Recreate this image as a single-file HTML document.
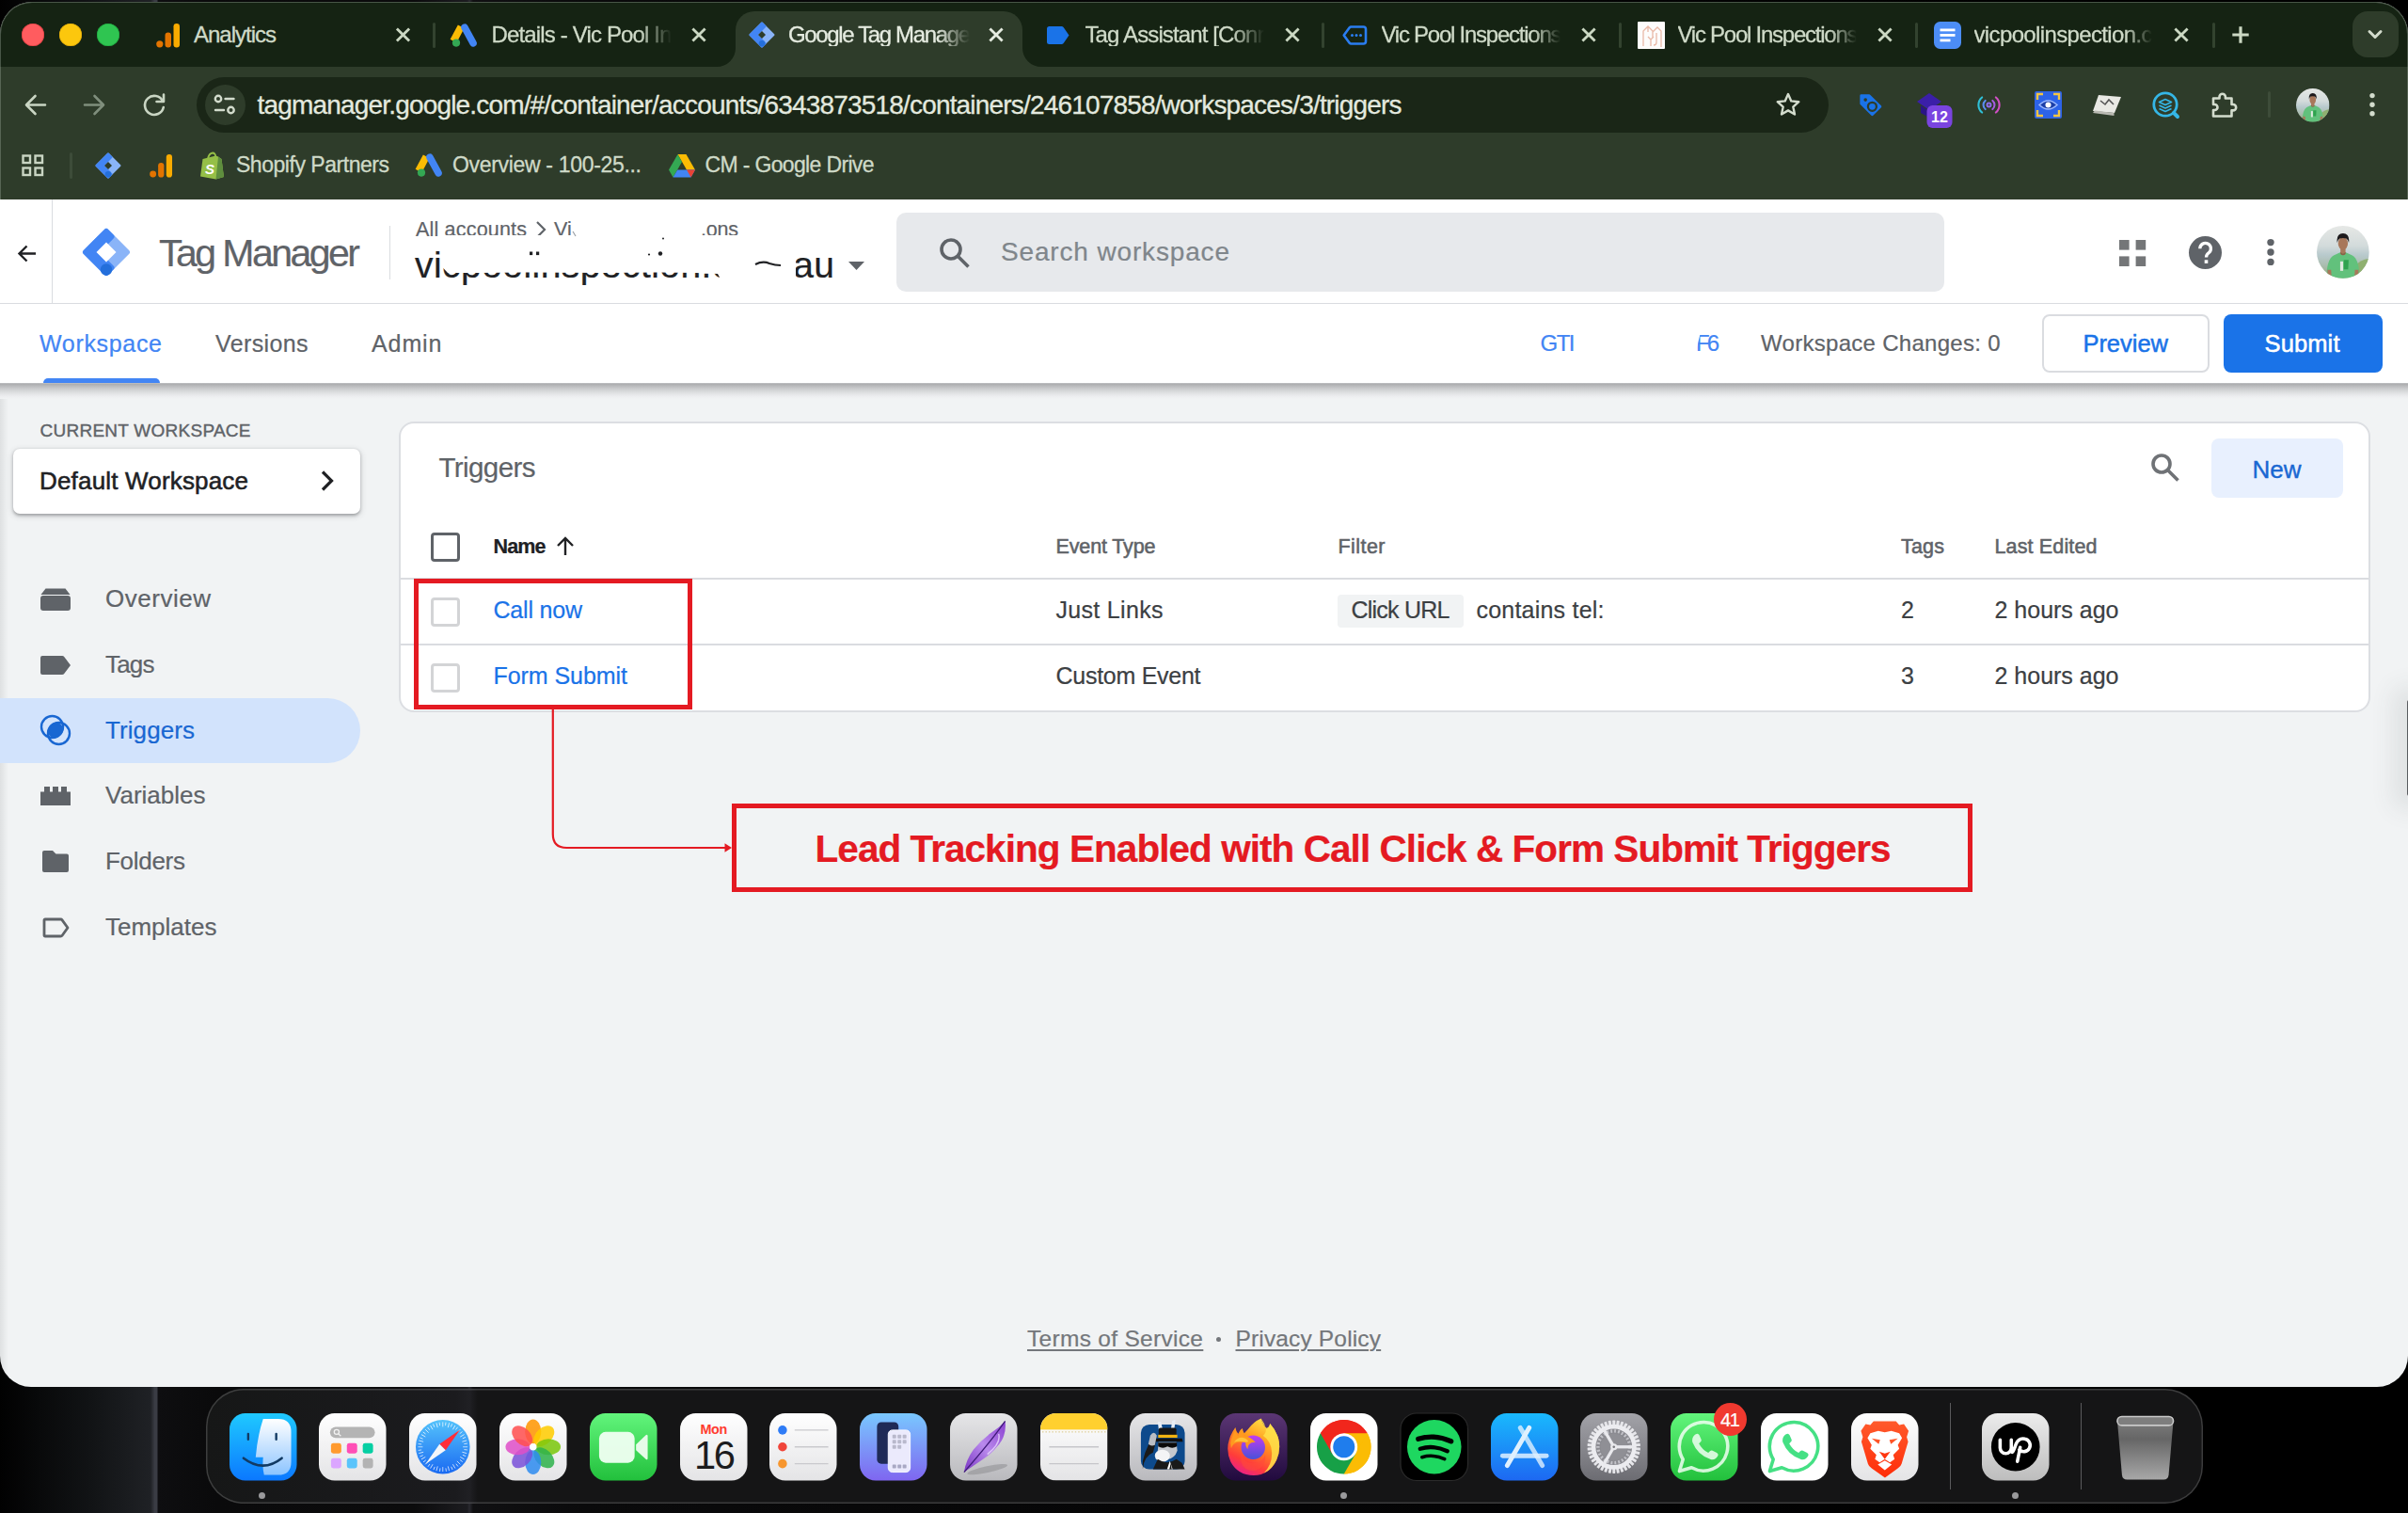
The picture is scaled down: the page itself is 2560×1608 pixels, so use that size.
<!DOCTYPE html>
<html><head><meta charset="utf-8"><title>Google Tag Manager</title>
<style>
*{box-sizing:border-box;margin:0;padding:0}
html,body{width:2560px;height:1608px;overflow:hidden;background:#000;font-family:"Liberation Sans",sans-serif}
.a{position:absolute}
.t{position:absolute;white-space:pre;line-height:1;font-family:"Liberation Sans",sans-serif;-webkit-text-stroke:.22px}
svg{position:absolute;overflow:visible}
#desk{position:absolute;left:0;top:0;width:2560px;height:1608px;background:linear-gradient(90deg,#010101 0,#08090a 40px,#121416 100px,#1f2125 160px,#3a3c44 164.500px,#3a3c44 166.500px,#0e0e10 168.500px,#0a0a0b 230px,#0b0b0c 440px,#1c1c20 497px,#2a2a30 499px,#101012 503px,#0a0a0b 620px,#060607 1200px,#000 2300px)}
#win{position:absolute;left:0;top:2px;width:2560px;height:1472px;border-radius:34px 34px 33px 33px;overflow:hidden;background:#f1f3f4}
#w{position:absolute;left:0;top:-2px;width:2560px;height:1608px}
.tabt{color:#d3dccd}
.sep{position:absolute;top:23.500px;width:3px;height:27px;background:#33432f;border-radius:1.500px}
</style></head><body>
<div id="desk"></div>
<div id="win"><div id="w">
<div class="a" style="left:0;top:0;width:2560px;height:72px;background:#152313"></div>
<div class="a" style="left:0;top:71px;width:2560px;height:141px;background:#2e3c2a"></div>
<div class="a" style="left:0;top:2px;width:2560px;height:210px;border:1.800px solid rgba(160,175,160,.36);border-bottom:none;border-radius:34px 34px 0 0;z-index:40"></div>
<!-- ===== TAB STRIP ===== -->
<div class="a" style="left:22.600px;top:24.900px;width:24.600px;height:24.600px;border-radius:50%;background:#ff5c5f;box-shadow:0 0 0 .6px #d93b3f inset"></div>
<div class="a" style="left:62.500px;top:24.900px;width:24.600px;height:24.600px;border-radius:50%;background:#fcc70d;box-shadow:0 0 0 .6px #d9a50a inset"></div>
<div class="a" style="left:102.600px;top:24.900px;width:24.600px;height:24.600px;border-radius:50%;background:#2fc551;box-shadow:0 0 0 .6px #1fa53e inset"></div>
<!-- active tab -->
<div class="a" style="left:782px;top:12px;width:305px;height:62px;background:#2e3c2a;border-radius:20px 20px 0 0"></div>
<svg style="left:762px;top:51px" width="20" height="20"><path d="M20 20H0A20 20 0 0 0 20 0Z" fill="#2e3c2a"/></svg>
<svg style="left:1087px;top:51px" width="20" height="20"><path d="M0 20H20A20 20 0 0 1 0 0Z" fill="#2e3c2a"/></svg>
<!-- separators -->
<div class="sep" style="left:460px"></div>
<div class="sep" style="left:1405px"></div>
<div class="sep" style="left:1721px"></div>
<div class="sep" style="left:2036px"></div>
<div class="sep" style="left:2352px"></div>
<!-- tab titles -->
<span class="t" style="left:206px;top:24.68px;font-size:24px;font-weight:400;color:#cfdac8;letter-spacing:-1.006px;-webkit-text-stroke:.3px #cfdac8">Analytics</span>
<span class="t" style="left:522.5px;top:24.68px;font-size:24px;font-weight:400;color:#cfdac8;letter-spacing:-0.849px;-webkit-text-stroke:.3px #cfdac8;-webkit-mask-image:linear-gradient(90deg,#000 82%,transparent 100%)">Details - Vic Pool In</span>
<span class="t" style="left:838px;top:24.68px;font-size:24px;font-weight:400;color:#e6ece1;letter-spacing:-1.357px;-webkit-text-stroke:.3px #e6ece1;-webkit-mask-image:linear-gradient(90deg,#000 82%,transparent 100%)">Google Tag Manage</span>
<span class="t" style="left:1153.5px;top:24.68px;font-size:24px;font-weight:400;color:#cfdac8;letter-spacing:-0.876px;-webkit-text-stroke:.3px #cfdac8;-webkit-mask-image:linear-gradient(90deg,#000 82%,transparent 100%)">Tag Assistant [Conr</span>
<span class="t" style="left:1468.5px;top:24.68px;font-size:24px;font-weight:400;color:#cfdac8;letter-spacing:-1.247px;-webkit-text-stroke:.3px #cfdac8;-webkit-mask-image:linear-gradient(90deg,#000 85%,transparent 100%)">Vic Pool Inspections</span>
<span class="t" style="left:1783.5px;top:24.68px;font-size:24px;font-weight:400;color:#cfdac8;letter-spacing:-1.247px;-webkit-text-stroke:.3px #cfdac8;-webkit-mask-image:linear-gradient(90deg,#000 85%,transparent 100%)">Vic Pool Inspections</span>
<span class="t" style="left:2098.5px;top:24.68px;font-size:24px;font-weight:400;color:#cfdac8;letter-spacing:-0.636px;-webkit-text-stroke:.3px #cfdac8;-webkit-mask-image:linear-gradient(90deg,#000 85%,transparent 100%)">vicpoolinspection.c</span>
<!-- close X's -->
<svg style="left:0;top:0" width="2560" height="72" fill="none" stroke="#cbd8c3" stroke-width="2.800" stroke-linecap="butt">
<g id="cx"><path d="M421.9 30.400l13.200 13.200m0-13.200l-13.200 13.200"/></g>
<path d="M736.4 30.400l13.200 13.200m0-13.200l-13.200 13.200"/>
<path d="M1052.4 30.400l13.200 13.200m0-13.200l-13.200 13.200" stroke="#e6ece1"/>
<path d="M1367.4 30.400l13.200 13.200m0-13.200l-13.200 13.200"/>
<path d="M1682.4 30.400l13.200 13.200m0-13.200l-13.200 13.200"/>
<path d="M1997.4 30.400l13.200 13.200m0-13.200l-13.200 13.200"/>
<path d="M2312.4 30.400l13.200 13.200m0-13.200l-13.200 13.200"/>
<path d="M2382 28.300v17.400m-8.700-8.700h17.400" stroke-width="3.200"/>
</svg>
<!-- tab search dropdown -->
<div class="a" style="left:2501px;top:12px;width:48.500px;height:49px;border-radius:16px;background:#2e3c2a"></div>
<svg style="left:2515.200px;top:29.500px" width="20" height="14" fill="none" stroke="#d3dccd" stroke-width="3" stroke-linecap="round" stroke-linejoin="round"><path d="M4 3.5l6 6 6-6"/></svg>
<!-- favicons -->
<!-- analytics -->
<svg style="left:166px;top:24px" width="26" height="27" viewBox="0 0 26 27"><rect x="18.5" y="1" width="6.5" height="25.5" rx="3.2" fill="#f9ab00"/><rect x="9.5" y="10.5" width="6.5" height="16" rx="3.2" fill="#e37400"/><circle cx="3.8" cy="22.8" r="3.6" fill="#e37400"/></svg>
<!-- google ads -->
<svg style="left:480px;top:25px" width="28" height="26" viewBox="0 0 28 26"><path d="M10.2 3.2L2 18.6" stroke="#fbbc04" stroke-width="7.6" stroke-linecap="butt"/><path d="M14 4.2l9 16.6" stroke="#4285f4" stroke-width="7.6" stroke-linecap="round"/><circle cx="5" cy="20.6" r="4.1" fill="#34a853"/></svg>
<!-- gtm -->
<svg style="left:796px;top:23px" width="28" height="28" viewBox="0 0 28 28"><path d="M14 1.5L26.5 14 14 26.5 1.5 14Z" fill="#8ab4f8" stroke="#8ab4f8" stroke-width="2" stroke-linejoin="round"/><path d="M14 1.5L1.5 14 14 26.5 17.5 23 8.6 14 17.5 5Z" fill="#4285f4" stroke="#4285f4" stroke-width="2" stroke-linejoin="round"/><path d="M14 10l4 4-4 4-4-4z" fill="#2e3c2a"/><circle cx="14" cy="23.2" r="3.3" fill="#246fdb"/></svg>
<!-- tag assistant -->
<svg style="left:1113px;top:28px" width="24" height="19" viewBox="0 0 24 19"><path d="M2.5 0H15.5q1.3 0 2.1 1L23.5 9.5 17.6 18q-.8 1-2.1 1H2.5Q0 19 0 16.500V2.500Q0 0 2.500 0Z" fill="#1a73e8"/></svg>
<!-- outline tag w/ dots -->
<svg style="left:1427px;top:27px" width="27" height="21" viewBox="0 0 27 21" fill="none"><path d="M9.4 1.5H22.5q2.5 0 2.500 2.500V17q0 2.500-2.500 2.500H9.4q-1 0-1.700-.8L1.700 10.500 7.700 2.300q.7-.8 1.700-.8Z" stroke="#2a7df0" stroke-width="2.6" stroke-linejoin="round"/><circle cx="10.5" cy="10.500" r="1.500" fill="#2a7df0"/><circle cx="15" cy="10.500" r="1.500" fill="#2a7df0"/><circle cx="19.500" cy="10.500" r="1.500" fill="#2a7df0"/></svg>
<!-- white square logo -->
<div class="a" style="left:1741px;top:23px;width:29px;height:29px;background:#fdfcfb;border-radius:1px"></div>
<svg style="left:1741px;top:23px" width="29" height="29" viewBox="0 0 29 29" fill="none" stroke="#e9b9a6" stroke-width="1.300"><path d="M6 26V10l5-5 5 5v8m-5-13v6m5 0l5-5 4 4v17M11 16l3 3 3-3m-3 3v7M20 12v10q0 3-3 3"/></svg>
<!-- docs -->
<svg style="left:2056px;top:23px" width="29" height="29" viewBox="0 0 29 29"><rect width="29" height="29" rx="6.5" fill="#4c8df6"/><rect x="6.500" y="7.500" width="16" height="2.800" fill="#fff"/><rect x="6.500" y="13" width="16" height="2.800" fill="#fff"/><rect x="6.500" y="18.500" width="11" height="2.800" fill="#fff"/></svg>
<!-- ===== TOOLBAR ===== -->
<svg style="left:0;top:71px" width="2560" height="141" fill="none" stroke-linecap="round" stroke-linejoin="round">
<!-- back -->
<path d="M48 40.500H28.500m9-9.500l-9.500 9.500 9.500 9.500" stroke="#c9d5c3" stroke-width="2.600"/>
<!-- forward -->
<path d="M90 40.500h19.500m-9-9.500l9.500 9.500-9.500 9.500" stroke="#7f8e7c" stroke-width="2.600"/>
<!-- reload -->
<path d="M173 36.500a10 10 0 1 0 .8 6.500" stroke="#c9d5c3" stroke-width="2.600"/><path d="M174 29.500v7.500h-7.500" stroke="#c9d5c3" stroke-width="2.600"/>
</svg>
<!-- omnibox -->
<div class="a" style="left:209px;top:82px;width:1735px;height:59px;border-radius:30px;background:#1a2617"></div>
<div class="a" style="left:217.500px;top:90px;width:43px;height:43px;border-radius:50%;background:#2e3c2a"></div>
<svg style="left:226px;top:99px" width="26" height="24" fill="none" stroke="#d3dccd" stroke-width="2.400" stroke-linecap="round"><circle cx="6" cy="6" r="3.200"/><path d="M13.500 6h9"/><circle cx="19.500" cy="18" r="3.200"/><path d="M3 18h9"/></svg>
<span class="t" style="left:273.500px;top:98.30px;font-size:28px;font-weight:400;color:#e3e9df;letter-spacing:-0.822px;-webkit-text-stroke:.3px #e3e9df">tagmanager.google.com/#/container/accounts/6343873518/containers/246107858/workspaces/3/triggers</span>
<!-- star -->
<svg style="left:1887px;top:97px" width="28" height="28" viewBox="0 0 28 28" fill="none" stroke="#d3dccd" stroke-width="2.400" stroke-linejoin="round"><path d="M14 3l3.300 7.400 8 .8-6 5.400 1.700 7.900-7-4.100-7 4.100 1.700-7.900-6-5.400 8-.8z"/></svg>
<!-- extensions -->
<!-- blue tag -->
<svg style="left:1975.500px;top:98px" width="27" height="27" viewBox="0 0 30 30"><path d="M3 4h9.500l13 13-9.500 9.500-13-13z" fill="#1a73e8" stroke="#1a73e8" stroke-width="3" stroke-linejoin="round"/><circle cx="16" cy="17" r="5" fill="#1a73e8" stroke="#2e3c2a" stroke-width="2.500"/><circle cx="8" cy="9" r="2" fill="#2e3c2a"/></svg>
<!-- purple cap w/ badge -->
<svg style="left:2036px;top:96px" width="40" height="40" viewBox="0 0 40 40"><path d="M2 12L15 3l13 9-13 9z" fill="#3b1fa8"/><path d="M6 16v8l9 5 9-5v-8l-9 6z" fill="#2a1485"/><rect x="12.500" y="16" width="27" height="24" rx="6" fill="#7a44e0"/><text x="26" y="34" font-family="Liberation Sans,sans-serif" font-size="16" font-weight="700" fill="#fff" text-anchor="middle">12</text></svg>
<!-- radio waves -->
<svg style="left:2102.500px;top:101px" width="23" height="21" viewBox="0 0 32 30" fill="none" stroke-width="3" stroke-linecap="round"><circle cx="16" cy="15" r="2.800" stroke="#8d6be8"/><path d="M10.500 8.500a8.500 8.500 0 0 0 0 13" stroke="#5a8df0"/><path d="M21.500 8.500a8.500 8.500 0 0 1 0 13" stroke="#a65be0"/><path d="M5.500 3.500a15 15 0 0 0 0 23" stroke="#2fc0d8"/><path d="M26.500 3.500a15 15 0 0 1 0 23" stroke="#d04fc4"/></svg>
<!-- eye box -->
<svg style="left:2163px;top:97px" width="29" height="29" viewBox="0 0 29 29"><rect width="29" height="29" rx="2" fill="#2d63e8"/><path d="M3 9V3h6M20 3h6v6M26 20v6h-6M9 26H3v-6" fill="none" stroke="#f4c542" stroke-width="2.400"/><path d="M5 14.500q9.500-9 19 0-9.500 9-19 0z" fill="#1c3fa8" stroke="#9bb8ff" stroke-width="1.500"/><circle cx="14.500" cy="14.500" r="3" fill="#fff"/></svg>
<!-- white parallelogram -->
<svg style="left:2224px;top:99px" width="32" height="25" viewBox="0 0 32 25"><path d="M7 2l24 2-7 17L1 19z" fill="#e9e9e4"/><path d="M3 18.500l20.500 2.500v3L1 21z" fill="#b9b9b2"/><path d="M9 8l5 4 4-5 5 5" stroke="#555" stroke-width="1.600" fill="none"/></svg>
<!-- cyan search ring -->
<svg style="left:2287px;top:96px" width="32" height="32" viewBox="0 0 32 32" fill="none"><circle cx="15" cy="15" r="12.200" stroke="#35b6e6" stroke-width="2.800"/><path d="M24 24l4 4" stroke="#35b6e6" stroke-width="4" stroke-linecap="round"/><path d="M8.500 12.500l6.500-3 6.500 3-6.500 3zM8.500 16l6.500 3 6.500-3M8.500 19.500l6.500 3 6.500-3" stroke="#35b6e6" stroke-width="1.700" stroke-linejoin="round"/></svg>
<!-- puzzle -->
<svg style="left:2350px;top:96px" width="30" height="30" viewBox="0 0 30 30" fill="none" stroke="#d3dccd" stroke-width="2.600" stroke-linejoin="round"><path d="M3 8.500h6.500v-1.500a3.200 3.200 0 0 1 6.400 0v1.500H22.500v6.500h1.500a3.200 3.200 0 0 1 0 6.400h-1.500V27.500H3V21h1.500a3 3 0 0 0 0-6H3z"/></svg>
<div class="a" style="left:2411px;top:97px;width:3px;height:28px;border-radius:1.500px;background:#3d4c39"></div>
<!-- avatar -->
<svg style="left:2441.300px;top:93.600px" width="35.500" height="35.500" viewBox="0 0 56 56"><defs><linearGradient id="gAv2" x1="0" y1="0" x2="0" y2="1"><stop offset="0" stop-color="#e6e8e6"/><stop offset=".38" stop-color="#d3dbdb"/><stop offset=".55" stop-color="#b9cacd"/><stop offset=".75" stop-color="#abbdb0"/><stop offset="1" stop-color="#8fa878"/></linearGradient><clipPath id="gAv2c"><circle cx="28" cy="28" r="28"/></clipPath></defs><g clip-path="url(#gAv2c)"><rect width="56" height="56" fill="url(#gAv2)"/><path d="M40 44q6-8 16-9v21H38z" fill="#8fb070"/><path d="M10.500 58Q10 36 18 31.500l7.500-3.500q2.500 2.500 5 0l7.500 3.500Q46 36 45.500 58Z" fill="#62c17c"/><path d="M11.500 47h3.800l.5 9h-4.500zM40.700 47h3.800l.2 9h-4.500z" fill="#a8775a"/><rect x="25.300" y="22" width="5.400" height="7.500" fill="#a8775a"/><path d="M25.300 28q2.700 3 5.400 0v2q-2.700 2.500-5.400 0z" fill="#8d6046"/><ellipse cx="28" cy="18.800" rx="5.200" ry="6.600" fill="#a8775a"/><path d="M21.800 18q-1.300-9.500 6.200-10 7.500.5 6.200 10-1-3.800-2.800-4.500-3.400-.9-6.800 0Q22.800 14.200 21.800 18Z" fill="#1d1a1c"/><rect x="25" y="38" width="3.200" height="10" fill="#dfe9df"/><path d="M28.800 36.500h5.200l-.5 10h-4.700z" fill="#2fa24f"/></g></svg>
<!-- dots -->
<svg style="left:2516.700px;top:95px" width="10" height="34" fill="#d3dccd"><circle cx="5" cy="6.600" r="2.700"/><circle cx="5" cy="16.200" r="2.700"/><circle cx="5" cy="25.800" r="2.700"/></svg>

<!-- ===== BOOKMARKS ===== -->
<svg style="left:23px;top:164px" width="24" height="24" fill="none" stroke="#c9d5c3" stroke-width="2.400"><rect x="1.500" y="1.500" width="7.500" height="7.500"/><rect x="14.500" y="1.500" width="7.500" height="7.500"/><rect x="1.500" y="14.500" width="7.500" height="7.500"/><rect x="14.500" y="14.500" width="7.500" height="7.500"/></svg>
<div class="a" style="left:73.500px;top:162px;width:3px;height:28px;border-radius:1.500px;background:#3d4c39"></div>
<svg style="left:101px;top:162px" width="28" height="28" viewBox="0 0 28 28"><path d="M14 1.500L26.500 14 14 26.500 1.500 14Z" fill="#8ab4f8" stroke="#8ab4f8" stroke-width="2" stroke-linejoin="round"/><path d="M14 1.500L1.500 14 14 26.500 17.500 23 8.600 14 17.500 5Z" fill="#4285f4" stroke="#4285f4" stroke-width="2" stroke-linejoin="round"/><path d="M14 10l4 4-4 4-4-4z" fill="#2e3c2a"/><circle cx="14" cy="23.200" r="3.300" fill="#246fdb"/></svg>
<svg style="left:159px;top:163px" width="25" height="26" viewBox="0 0 26 27"><rect x="18.500" y="1" width="6.500" height="25.500" rx="3.200" fill="#f9ab00"/><rect x="9.500" y="10.500" width="6.500" height="16" rx="3.200" fill="#e37400"/><circle cx="3.800" cy="22.800" r="3.600" fill="#e37400"/></svg>
<!-- shopify -->
<svg style="left:212px;top:161px" width="27" height="30" viewBox="0 0 27 30"><path d="M3.500 8l14-3.500 2.500 1 3.500 2.500L26 27l-8.500 2.500L1 26.500z" fill="#95bf47"/><path d="M20 5.500l3.500 2.500L26 27l-8.500 2.500z" fill="#5e8e3e"/><path d="M9 8q1-6 5-6.500 3 0 3.500 5" fill="none" stroke="#95bf47" stroke-width="1.800"/><text x="11" y="23.500" font-family="Liberation Sans,sans-serif" font-size="15" font-weight="700" font-style="italic" fill="#fff" text-anchor="middle">S</text></svg>
<span class="t" style="left:251px;top:164.03px;font-size:23px;font-weight:400;color:#cfdac8;letter-spacing:-0.469px;-webkit-text-stroke:.3px #cfdac8">Shopify Partners</span>
<svg style="left:443px;top:163px" width="28" height="26" viewBox="0 0 28 26"><path d="M10.200 3.200L2 18.600" stroke="#fbbc04" stroke-width="7.600"/><path d="M14 4.200l9 16.600" stroke="#4285f4" stroke-width="7.600" stroke-linecap="round"/><circle cx="5" cy="20.600" r="4.100" fill="#34a853"/></svg>
<span class="t" style="left:481px;top:164.03px;font-size:23px;font-weight:400;color:#cfdac8;letter-spacing:-0.321px;-webkit-text-stroke:.3px #cfdac8">Overview - 100-25...</span>
<!-- drive -->
<svg style="left:711px;top:164px" width="28" height="25" viewBox="0 0 28 25"><path d="M9.500 0h9L28 16.500h-9z" fill="#fbbc04"/><path d="M9.500 0L0 16.500 4.500 24.500 14 8z" fill="#34a853"/><path d="M4.500 24.500h19l4.500-8H9.200z" fill="#4285f4"/><path d="M19 16.500h9l-4.500 8z" fill="#ea4335"/></svg>
<span class="t" style="left:749.500px;top:164.03px;font-size:23px;font-weight:400;color:#cfdac8;letter-spacing:-0.652px;-webkit-text-stroke:.3px #cfdac8">CM - Google Drive</span>
<!-- ===== GTM HEADER ===== -->
<div class="a" style="left:0;top:212px;width:2560px;height:195px;background:#fff;z-index:5"></div>
<div class="a" style="left:0;top:406.700px;width:2560px;height:17px;background:linear-gradient(#c4c5c7 0,#adaeb0 7%,#b4b5b7 14%,#c7c8ca 32%,#d8dadb 52%,#e6e7e9 72%,#eeeff1 88%,#f1f3f4 100%);z-index:5"></div>
<div class="a" style="left:0;top:0;width:2560px;height:1608px;z-index:6">
<div class="a" style="left:0;top:321.500px;width:2560px;height:1.500px;background:#dadce0"></div>
<div class="a" style="left:54.500px;top:212px;width:1.500px;height:110px;background:#dadce0"></div>
<svg style="left:17px;top:258px" width="24" height="24" fill="none" stroke="#202124" stroke-width="2.400" stroke-linejoin="miter"><path d="M21 11.500H4m7.500-8L3.500 11.500l8 8"/></svg>
<!-- logo -->
<svg style="left:87px;top:242px" width="52" height="52" viewBox="0 0 52 52"><path d="M26 4L48 26 26 48 4 26Z" fill="#8ab4f8" stroke="#8ab4f8" stroke-width="6" stroke-linejoin="round"/><path d="M26 4L4 26 26 48 31.500 42.500 15 26 31.500 9.500Z" fill="#4285f4" stroke="#4285f4" stroke-width="6" stroke-linejoin="round"/><path d="M26 15.500L36.500 26 26 36.500 15.500 26z" fill="#fff"/><circle cx="26" cy="44.500" r="6.200" fill="#246fdb"/></svg>
<span class="t" style="left:169px;top:248.79px;font-size:41px;font-weight:400;color:#5f6368;letter-spacing:-2.533px;">Tag Manager</span>
<div class="a" style="left:413.500px;top:240px;width:1.500px;height:57px;background:#dadce0"></div>
<span class="t" style="left:442px;top:233.80px;font-size:21.500px;font-weight:400;color:#5f6368;letter-spacing:0.189px;">All accounts</span>
<svg style="left:568px;top:234px" width="14" height="20" fill="none" stroke="#5f6368" stroke-width="2.200"><path d="M3 2l8 8-8 8"/></svg>
<span class="t" style="left:589px;top:233.80px;font-size:21.500px;font-weight:400;color:#5f6368;">Vi</span>
<span class="t" style="left:745px;top:233.80px;font-size:21.500px;font-weight:400;color:#5f6368;letter-spacing:-0.214px;">.ons</span>
<!-- container name (redacted) -->
<span class="t" style="left:441px;top:261.99px;font-size:39px;font-weight:400;color:#202124;letter-spacing:0.446px;">vicpoolinspection.com.au</span>
<svg style="left:0;top:0" width="960" height="330"><path d="M468.500 250H846V300H768L763 291 740 290 700 289.500 640 290 560 289.500 500 290 476 290 468.500 282Z" fill="#fff"/><path d="M803 281q8-4 15-1 6 2 12 2" fill="none" stroke="#202124" stroke-width="2.200"/><rect x="563" y="267.500" width="3.200" height="3.600" fill="#202124"/><rect x="570" y="267.500" width="3.200" height="3.600" fill="#202124"/><circle cx="702" cy="269.500" r="2.200" fill="#202124"/><circle cx="690" cy="270.500" r="1.100" fill="#202124"/><circle cx="705" cy="253.500" r="1" fill="#202124"/><path d="M609 246l3 5" stroke="#9aa0a6" stroke-width="1.200"/></svg>
<svg style="left:902px;top:278px" width="18" height="10"><path d="M0 0h17l-8.500 9z" fill="#5f6368"/></svg>
<!-- search -->
<div class="a" style="left:953px;top:226.200px;width:1114px;height:83.500px;border-radius:10px;background:#e7e9ec"></div>
<svg style="left:998px;top:252px" width="34" height="34" fill="none" stroke="#5f6368" stroke-width="3.600"><circle cx="13" cy="13" r="10"/><path d="M20.500 20.500L31.500 31.500" stroke-linecap="butt"/></svg>
<span class="t" style="left:1064px;top:253.80px;font-size:28px;font-weight:400;color:#80868b;letter-spacing:0.844px;">Search workspace</span>
<!-- right icons -->
<svg style="left:2253px;top:254.500px" width="30" height="30" fill="#747678"><rect x="0" y="0" width="10.600" height="10.600"/><rect x="17.600" y="0" width="10.600" height="10.600"/><rect x="0" y="17.400" width="10.600" height="10.600"/><rect x="17.600" y="17.400" width="10.600" height="10.600"/></svg>
<svg style="left:2326.500px;top:250.500px" width="35" height="35" viewBox="0 0 35 35"><circle cx="17.500" cy="17.500" r="17.500" fill="#5f6368"/><path d="M11.800 13.200a5.800 5.800 0 1 1 9.300 4.600q-2.600 1.900-2.600 4.700" fill="none" stroke="#fff" stroke-width="3.300"/><rect x="16.700" y="25.300" width="3.600" height="3.600" fill="#fff"/></svg>
<svg style="left:2408.500px;top:252px" width="10" height="32" fill="#5f6368"><circle cx="5" cy="5.600" r="3.700"/><circle cx="5" cy="16" r="3.700"/><circle cx="5" cy="26.400" r="3.700"/></svg>
<svg style="left:2462.500px;top:240px" width="55.800" height="55.800" viewBox="0 0 56 56"><defs><linearGradient id="gAv1" x1="0" y1="0" x2="0" y2="1"><stop offset="0" stop-color="#e6e8e6"/><stop offset=".38" stop-color="#d3dbdb"/><stop offset=".55" stop-color="#b9cacd"/><stop offset=".75" stop-color="#abbdb0"/><stop offset="1" stop-color="#8fa878"/></linearGradient><clipPath id="gAv1c"><circle cx="28" cy="28" r="28"/></clipPath></defs><g clip-path="url(#gAv1c)"><rect width="56" height="56" fill="url(#gAv1)"/><path d="M40 44q6-8 16-9v21H38z" fill="#8fb070"/><path d="M10.500 58Q10 36 18 31.500l7.500-3.500q2.500 2.500 5 0l7.500 3.500Q46 36 45.500 58Z" fill="#62c17c"/><path d="M11.500 47h3.800l.5 9h-4.500zM40.700 47h3.800l.2 9h-4.500z" fill="#a8775a"/><rect x="25.300" y="22" width="5.400" height="7.500" fill="#a8775a"/><path d="M25.300 28q2.700 3 5.400 0v2q-2.700 2.500-5.400 0z" fill="#8d6046"/><ellipse cx="28" cy="18.800" rx="5.200" ry="6.600" fill="#a8775a"/><path d="M21.800 18q-1.300-9.500 6.200-10 7.500.5 6.200 10-1-3.800-2.800-4.500-3.400-.9-6.800 0Q22.800 14.200 21.800 18Z" fill="#1d1a1c"/><rect x="25" y="38" width="3.200" height="10" fill="#dfe9df"/><path d="M28.800 36.500h5.200l-.5 10h-4.700z" fill="#2fa24f"/></g></svg>

<!-- ===== SUB NAV ===== -->
<span class="t" style="left:42px;top:352.84px;font-size:25px;font-weight:400;color:#4285f4;letter-spacing:0.676px;">Workspace</span>
<span class="t" style="left:229px;top:352.84px;font-size:25px;font-weight:400;color:#5f6368;letter-spacing:0.373px;">Versions</span>
<span class="t" style="left:395px;top:352.84px;font-size:25px;font-weight:400;color:#5f6368;letter-spacing:0.906px;">Admin</span>
<div class="a" style="left:45.500px;top:402px;width:124px;height:5px;border-radius:6px 6px 0 0;background:#4285f4"></div>
<span class="t" style="left:1637.500px;top:353.48px;font-size:24px;font-weight:400;color:#4285f4;letter-spacing:-1.500px;">GTI</span>
<div class="a" style="left:1673.500px;top:350px;width:20px;height:30px;background:#fff"></div>
<span class="t" style="left:1803px;top:353.48px;font-size:24px;font-weight:400;color:#4285f4;letter-spacing:-3.016px;">F6</span><div class="a" style="left:1800px;top:352px;width:4.500px;height:26px;background:#fff;transform:skewX(-14deg)"></div>
<span class="t" style="left:1872px;top:353.48px;font-size:24px;font-weight:400;color:#5f6368;letter-spacing:0.288px;">Workspace Changes: 0</span>
<div class="a" style="left:2170.500px;top:333.500px;width:178px;height:62px;border:2px solid #dadce0;border-radius:8px;background:#fff"></div>
<span class="t" style="left:2214.400px;top:352.71px;font-size:25.500px;font-weight:400;color:#1a73e8;letter-spacing:-0.017px;-webkit-text-stroke:.5px #1a73e8">Preview</span>
<div class="a" style="left:2363.500px;top:333.500px;width:169px;height:62px;border-radius:8px;background:#1a73e8"></div>
<span class="t" style="left:2407.500px;top:352.71px;font-size:25.500px;font-weight:400;color:#fff;letter-spacing:0.125px;-webkit-text-stroke:.5px #fff">Submit</span>
</div>
<!-- edge-shade --><div class="a" style="left:0;top:407px;width:9px;height:1067px;background:linear-gradient(90deg,rgba(60,64,67,.10),rgba(60,64,67,0))"></div>
<!-- ===== SIDEBAR ===== -->
<span class="t" style="left:42.500px;top:447.92px;font-size:19px;font-weight:400;color:#5f6368;letter-spacing:0.254px;-webkit-text-stroke:.4px #5f6368">CURRENT WORKSPACE</span>
<div class="a" style="left:14px;top:477px;width:369px;height:69px;border-radius:7px;background:#fff;box-shadow:0 1.500px 3px rgba(60,64,67,.35),0 2px 6px 1px rgba(60,64,67,.16)"></div>
<span class="t" style="left:42px;top:497.99px;font-size:26px;font-weight:400;color:#202124;letter-spacing:0.177px;-webkit-text-stroke:.55px #202124">Default Workspace</span>
<svg style="left:340px;top:499px" width="16" height="24" fill="none" stroke="#202124" stroke-width="3.200"><path d="M3 2.500l9.500 9.500-9.500 9.500"/></svg>
<!-- active pill -->
<div class="a" style="left:0;top:742px;width:383px;height:69px;border-radius:0 35px 35px 0;background:#d2e3fc"></div>
<span class="t" style="left:112px;top:623.49px;font-size:26px;font-weight:400;color:#5f6368;letter-spacing:0.520px;">Overview</span>
<span class="t" style="left:112px;top:692.99px;font-size:26px;font-weight:400;color:#5f6368;letter-spacing:-0.807px;">Tags</span>
<span class="t" style="left:112px;top:762.99px;font-size:26px;font-weight:400;color:#1967d2;letter-spacing:0.087px;">Triggers</span>
<span class="t" style="left:112px;top:832.49px;font-size:26px;font-weight:400;color:#5f6368;letter-spacing:0.004px;">Variables</span>
<span class="t" style="left:112px;top:902.49px;font-size:26px;font-weight:400;color:#5f6368;letter-spacing:-0.284px;">Folders</span>
<span class="t" style="left:112px;top:971.99px;font-size:26px;font-weight:400;color:#5f6368;letter-spacing:0.000px;">Templates</span>
<!-- icons -->
<!-- overview -->
<svg style="left:42px;top:624px" width="34" height="26" fill="#5f6368"><path d="M6.500 1.500h21l5 6.500h-31z"/><rect x="1" y="9" width="32" height="16" rx="3"/></svg>
<!-- tags -->
<svg style="left:42px;top:696px" width="34" height="22" fill="#5f6368"><path d="M3 1h21q1.500 0 2.400 1.200L33 11l-6.600 8.800Q25.500 21 24 21H3q-2 0-2-2V3q0-2 2-2z"/></svg>
<!-- triggers -->
<svg style="left:42px;top:759px" width="34" height="34" fill="none"><circle cx="13.500" cy="13.500" r="11.500" stroke="#1967d2" stroke-width="2.400"/><circle cx="20.500" cy="20.500" r="11.500" stroke="#1967d2" stroke-width="2.400"/><path d="M9.300 18.500A11.500 11.500 0 0 1 18.500 9.300 11.500 11.500 0 0 1 24.700 15.500 11.500 11.500 0 0 1 15.500 24.700 11.500 11.500 0 0 1 9.300 18.500Z" fill="#1967d2" stroke="#1967d2" stroke-width="2"/></svg>
<!-- variables -->
<svg style="left:42px;top:835px" width="34" height="22" fill="#5f6368"><path d="M1 6.500h4V1h6v5.500h3V1h6v5.500h3V1h6v5.500h4V21H1z"/></svg>
<!-- folders -->
<svg style="left:44px;top:903px" width="30" height="25" fill="#5f6368"><path d="M3 1h9l3.500 3.500H27q2 0 2 2V22q0 2-2 2H3q-2 0-2-2V3q0-2 2-2z"/></svg>
<!-- templates -->
<svg style="left:45px;top:975px" width="30" height="22" fill="none" stroke="#5f6368" stroke-width="2.800" stroke-linejoin="round"><path d="M3 2h16.500q1 0 1.600.8L27 11l-5.900 8.200q-.6.800-1.600.8H3q-1 0-1-1V3q0-1 1-1z"/></svg>
<!-- ===== CARD ===== -->
<div class="a" style="left:423.500px;top:447.500px;width:2096.500px;height:309px;border-radius:16px;background:#fff;border:2px solid #dcdee2"></div>
<span class="t" style="left:466.500px;top:481.53px;font-size:29.500px;font-weight:400;color:#5f6368;letter-spacing:-0.587px;">Triggers</span>
<svg style="left:2286px;top:481px" width="32" height="32" fill="none" stroke="#6f7276" stroke-width="3.600"><circle cx="12" cy="12" r="9"/><path d="M18.500 18.500L29.500 29.500"/></svg>
<div class="a" style="left:2351px;top:466px;width:139.500px;height:63px;border-radius:8px;background:#e8f0fe"></div>
<span class="t" style="left:2394.500px;top:485.99px;font-size:26px;font-weight:400;color:#1967d2;letter-spacing:-0.008px;-webkit-text-stroke:.4px #1967d2">New</span>
<!-- header row -->
<div class="a" style="left:458px;top:565.500px;width:31px;height:31px;border:3px solid #5f6368;border-radius:4px"></div>
<span class="t" style="left:524.500px;top:570.80px;font-size:21.500px;font-weight:700;color:#202124;letter-spacing:-0.854px;">Name</span>
<svg style="left:590px;top:569px" width="22" height="22" fill="none" stroke="#202124" stroke-width="2.400"><path d="M11 21V3m-8 8l8-8 8 8"/></svg>
<span class="t" style="left:1122.500px;top:570.80px;font-size:21.500px;font-weight:400;color:#5f6368;letter-spacing:-0.132px;-webkit-text-stroke:.55px #5f6368">Event Type</span>
<span class="t" style="left:1422.500px;top:570.80px;font-size:21.500px;font-weight:400;color:#5f6368;letter-spacing:0.444px;-webkit-text-stroke:.55px #5f6368">Filter</span>
<span class="t" style="left:2021px;top:570.80px;font-size:21.500px;font-weight:400;color:#5f6368;letter-spacing:0.193px;-webkit-text-stroke:.55px #5f6368">Tags</span>
<span class="t" style="left:2120.500px;top:570.80px;font-size:21.500px;font-weight:400;color:#5f6368;letter-spacing:0.142px;-webkit-text-stroke:.55px #5f6368">Last Edited</span>
<div class="a" style="left:425px;top:614px;width:2093px;height:1.500px;background:#dadce0"></div>
<div class="a" style="left:425px;top:684px;width:2093px;height:1.500px;background:#dadce0"></div>
<!-- row 1 -->
<div class="a" style="left:458px;top:635px;width:31px;height:31px;border:3px solid #d3d4d6;border-radius:4px"></div>
<span class="t" style="left:524.500px;top:635.84px;font-size:25px;font-weight:400;color:#1a73e8;letter-spacing:-0.196px;">Call now</span>
<span class="t" style="left:1122.500px;top:635.84px;font-size:25px;font-weight:400;color:#3c4043;letter-spacing:0.314px;">Just Links</span>
<div class="a" style="left:1422px;top:631.500px;width:134px;height:35px;border-radius:4px;background:#f1f3f4"></div>
<span class="t" style="left:1436.500px;top:635.84px;font-size:25px;font-weight:400;color:#3c4043;letter-spacing:-0.766px;">Click URL</span>
<span class="t" style="left:1569.500px;top:635.84px;font-size:25px;font-weight:400;color:#3c4043;letter-spacing:0.215px;">contains tel:</span>
<span class="t" style="left:2021px;top:635.84px;font-size:25px;font-weight:400;color:#3c4043;">2</span>
<span class="t" style="left:2120.500px;top:635.84px;font-size:25px;font-weight:400;color:#3c4043;letter-spacing:-0.005px;">2 hours ago</span>
<!-- row 2 -->
<div class="a" style="left:458px;top:704.500px;width:31px;height:31px;border:3px solid #d3d4d6;border-radius:4px"></div>
<span class="t" style="left:524.500px;top:705.54px;font-size:25px;font-weight:400;color:#1a73e8;letter-spacing:-0.059px;">Form Submit</span>
<span class="t" style="left:1122.500px;top:705.54px;font-size:25px;font-weight:400;color:#3c4043;letter-spacing:-0.274px;">Custom Event</span>
<span class="t" style="left:2021px;top:705.54px;font-size:25px;font-weight:400;color:#3c4043;">3</span>
<span class="t" style="left:2120.500px;top:705.54px;font-size:25px;font-weight:400;color:#3c4043;letter-spacing:-0.005px;">2 hours ago</span>

<!-- ===== ANNOTATIONS ===== -->
<div class="a" style="left:440.300px;top:614.500px;width:295.300px;height:139.200px;border:5.800px solid #e41a22;z-index:8"></div>
<svg style="left:0;top:0;z-index:8" width="2560" height="1000" fill="none"><path d="M587.800 753V886.500q0 14.500 14.500 14.500H774" stroke="#e41a22" stroke-width="2.200"/><path d="M770.500 896.300l7.500 4.700-7.500 4.700z" fill="#e41a22"/></svg>
<div class="a" style="left:778px;top:854.200px;width:1319px;height:94.200px;border:5.800px solid #e41a22;z-index:8"></div>
<span class="t" style="left:866.500px;top:881.72px;font-size:40.500px;font-weight:700;color:#e41a22;letter-spacing:-0.941px;z-index:8">Lead Tracking Enabled with Call Click &amp; Form Submit Triggers</span>

<!-- ===== FOOTER ===== -->
<span class="t" style="left:1092px;top:1411.26px;font-size:24.500px;font-weight:400;color:#74777b;letter-spacing:0.304px;text-decoration:underline;text-underline-offset:3px;text-decoration-thickness:1.500px">Terms of Service</span>
<div class="a" style="left:1293px;top:1421px;width:5px;height:5px;border-radius:50%;background:#74777b"></div>
<span class="t" style="left:1313.500px;top:1411.26px;font-size:24.500px;font-weight:400;color:#74777b;letter-spacing:0.155px;text-decoration:underline;text-underline-offset:3px;text-decoration-thickness:1.500px">Privacy Policy</span>
<div class="a" style="left:2558.800px;top:744px;width:5px;height:102px;border-radius:3px;background:#5a5c60;box-shadow:0 0 26px 14px rgba(60,64,67,.10);z-index:7"></div>
<!-- ===== DOCK ===== -->
</div></div>
<div class="a" style="left:218.500px;top:1476px;width:2123px;height:122px;border-radius:40px;background:linear-gradient(90deg,#161717 0,#1b1b1e 12.500%,#202024 13.200%,#151516 13.600%,#151516 100%);box-shadow:0 0 0 1.500px rgba(255,255,255,.17) inset"></div>
<svg width="0" height="0" style="left:0;top:0"><defs>
<linearGradient id="gFinder" x1="0" y1="0" x2="0" y2="1"><stop offset="0" stop-color="#1fc9ff"/><stop offset="1" stop-color="#0b78ff"/></linearGradient>
<linearGradient id="gFinderR" x1="0" y1="0" x2="0" y2="1"><stop offset="0" stop-color="#ffffff"/><stop offset="1" stop-color="#8cc4ff"/></linearGradient>
<linearGradient id="gWhite" x1="0" y1="0" x2="0" y2="1"><stop offset="0" stop-color="#ffffff"/><stop offset="1" stop-color="#e4e4e6"/></linearGradient>
<linearGradient id="gSafari" x1="0" y1="0" x2="0" y2="1"><stop offset="0" stop-color="#55c3fb"/><stop offset="1" stop-color="#1a6af2"/></linearGradient>
<linearGradient id="gGreen" x1="0" y1="0" x2="0" y2="1"><stop offset="0" stop-color="#62f57c"/><stop offset="1" stop-color="#22c03c"/></linearGradient>
<linearGradient id="gMirror" x1="0" y1="0" x2="0" y2="1"><stop offset="0" stop-color="#79c8ff"/><stop offset="1" stop-color="#7f66f0"/></linearGradient>
<linearGradient id="gGrey" x1="0" y1="0" x2="0" y2="1"><stop offset="0" stop-color="#e6e6e8"/><stop offset="1" stop-color="#b9b9bd"/></linearGradient>
<linearGradient id="gFeather" x1="1" y1="0" x2="0" y2="1"><stop offset="0" stop-color="#8a3fd0"/><stop offset=".5" stop-color="#b98aec"/><stop offset="1" stop-color="#7a35c4"/></linearGradient>
<linearGradient id="gFox" x1="0" y1="0" x2="0" y2="1"><stop offset="0" stop-color="#5b3674"/><stop offset="1" stop-color="#210a3e"/></linearGradient>
<linearGradient id="gFoxO" x1=".75" y1="0" x2=".3" y2="1"><stop offset="0" stop-color="#ffe84a"/><stop offset=".38" stop-color="#ff9a1e"/><stop offset=".78" stop-color="#ff3b3b"/><stop offset="1" stop-color="#e8208a"/></linearGradient>
<linearGradient id="gFoxP" x1="0" y1="0" x2="0" y2="1"><stop offset="0" stop-color="#c23cf0"/><stop offset="1" stop-color="#4852d8"/></linearGradient>
<linearGradient id="gStore" x1="0" y1="0" x2="0" y2="1"><stop offset="0" stop-color="#19b9fd"/><stop offset="1" stop-color="#1d68f2"/></linearGradient>
<linearGradient id="gSet" x1="0" y1="0" x2="0" y2="1"><stop offset="0" stop-color="#a3a3a9"/><stop offset="1" stop-color="#6c6c72"/></linearGradient>
<linearGradient id="gBrave" x1="0" y1="0" x2="0" y2="1"><stop offset="0" stop-color="#ff5a2c"/><stop offset="1" stop-color="#ff2d08"/></linearGradient>
<linearGradient id="gTrash" x1="0" y1="0" x2="0" y2="1"><stop offset="0" stop-color="#8a8a8a"/><stop offset=".35" stop-color="#6d6d6d"/><stop offset="1" stop-color="#b4b4b4"/></linearGradient>
<linearGradient id="gUp" x1="0" y1="0" x2="0" y2="1"><stop offset="0" stop-color="#ececec"/><stop offset="1" stop-color="#bdbdbd"/></linearGradient>
</defs></svg>
<svg style="left:243.6px;top:1501.5px" width="71.5" height="71.5" viewBox="0 0 72 72"><rect width="72" height="72" rx="17" fill="url(#gFinder)" /><path d="M36 6H52Q66 6 66 20V52Q66 66 52 66H37Q35 58 36 47H28Q30 24 36 6Z" fill="url(#gFinderR)"/><path d="M20 22v6M50 22v6" stroke="#123a63" stroke-width="2.4" stroke-linecap="round"/><path d="M15 48q21 16 41 0" fill="none" stroke="#123a63" stroke-width="2.6" stroke-linecap="round"/></svg>
<svg style="left:339.4px;top:1501.5px" width="71.5" height="71.5" viewBox="0 0 72 72"><rect width="72" height="72" rx="17" fill="url(#gWhite)" /><rect x="12" y="14.5" width="48" height="12" rx="6" fill="#b4b4b4"/><circle cx="19" cy="20" r="2.6" fill="none" stroke="#f2f2f2" stroke-width="1.3"/><path d="M21 22l2.5 2.500" stroke="#f2f2f2" stroke-width="1.3"/><rect x="13" y="32" width="11" height="11" rx="2.5" fill="#ff9a2e"/><rect x="30" y="32" width="11" height="11" rx="2.5" fill="#ff4fb6"/><rect x="47" y="32" width="11" height="11" rx="2.5" fill="#06cfa3"/><rect x="13" y="48" width="11" height="11" rx="2.5" fill="#dba6ff"/><rect x="30" y="48" width="11" height="11" rx="2.5" fill="#5ac4fb"/><rect x="47" y="48" width="11" height="11" rx="2.5" fill="#b3b3b3"/></svg>
<svg style="left:435.2px;top:1501.5px" width="71.5" height="71.5" viewBox="0 0 72 72"><rect width="72" height="72" rx="17" fill="url(#gWhite)" /><circle cx="36" cy="36" r="29" fill="url(#gSafari)"/><path d="M36 9.5 V14.5" stroke="#fff" stroke-width="0.9" opacity=".75" transform="rotate(0 36 36)"/><path d="M36 9.5 V13" stroke="#fff" stroke-width="0.9" opacity=".75" transform="rotate(7 36 36)"/><path d="M36 9.5 V14.5" stroke="#fff" stroke-width="0.9" opacity=".75" transform="rotate(15 36 36)"/><path d="M36 9.5 V13" stroke="#fff" stroke-width="0.9" opacity=".75" transform="rotate(22 36 36)"/><path d="M36 9.5 V14.5" stroke="#fff" stroke-width="0.9" opacity=".75" transform="rotate(30 36 36)"/><path d="M36 9.5 V13" stroke="#fff" stroke-width="0.9" opacity=".75" transform="rotate(37 36 36)"/><path d="M36 9.5 V14.5" stroke="#fff" stroke-width="0.9" opacity=".75" transform="rotate(45 36 36)"/><path d="M36 9.5 V13" stroke="#fff" stroke-width="0.9" opacity=".75" transform="rotate(52 36 36)"/><path d="M36 9.5 V14.5" stroke="#fff" stroke-width="0.9" opacity=".75" transform="rotate(60 36 36)"/><path d="M36 9.5 V13" stroke="#fff" stroke-width="0.9" opacity=".75" transform="rotate(67 36 36)"/><path d="M36 9.5 V14.5" stroke="#fff" stroke-width="0.9" opacity=".75" transform="rotate(75 36 36)"/><path d="M36 9.5 V13" stroke="#fff" stroke-width="0.9" opacity=".75" transform="rotate(82 36 36)"/><path d="M36 9.5 V14.5" stroke="#fff" stroke-width="0.9" opacity=".75" transform="rotate(90 36 36)"/><path d="M36 9.5 V13" stroke="#fff" stroke-width="0.9" opacity=".75" transform="rotate(97 36 36)"/><path d="M36 9.5 V14.5" stroke="#fff" stroke-width="0.9" opacity=".75" transform="rotate(105 36 36)"/><path d="M36 9.5 V13" stroke="#fff" stroke-width="0.9" opacity=".75" transform="rotate(112 36 36)"/><path d="M36 9.5 V14.5" stroke="#fff" stroke-width="0.9" opacity=".75" transform="rotate(120 36 36)"/><path d="M36 9.5 V13" stroke="#fff" stroke-width="0.9" opacity=".75" transform="rotate(127 36 36)"/><path d="M36 9.5 V14.5" stroke="#fff" stroke-width="0.9" opacity=".75" transform="rotate(135 36 36)"/><path d="M36 9.5 V13" stroke="#fff" stroke-width="0.9" opacity=".75" transform="rotate(142 36 36)"/><path d="M36 9.5 V14.5" stroke="#fff" stroke-width="0.9" opacity=".75" transform="rotate(150 36 36)"/><path d="M36 9.5 V13" stroke="#fff" stroke-width="0.9" opacity=".75" transform="rotate(157 36 36)"/><path d="M36 9.5 V14.5" stroke="#fff" stroke-width="0.9" opacity=".75" transform="rotate(165 36 36)"/><path d="M36 9.5 V13" stroke="#fff" stroke-width="0.9" opacity=".75" transform="rotate(172 36 36)"/><path d="M36 9.5 V14.5" stroke="#fff" stroke-width="0.9" opacity=".75" transform="rotate(180 36 36)"/><path d="M36 9.5 V13" stroke="#fff" stroke-width="0.9" opacity=".75" transform="rotate(187 36 36)"/><path d="M36 9.5 V14.5" stroke="#fff" stroke-width="0.9" opacity=".75" transform="rotate(195 36 36)"/><path d="M36 9.5 V13" stroke="#fff" stroke-width="0.9" opacity=".75" transform="rotate(202 36 36)"/><path d="M36 9.5 V14.5" stroke="#fff" stroke-width="0.9" opacity=".75" transform="rotate(210 36 36)"/><path d="M36 9.5 V13" stroke="#fff" stroke-width="0.9" opacity=".75" transform="rotate(217 36 36)"/><path d="M36 9.5 V14.5" stroke="#fff" stroke-width="0.9" opacity=".75" transform="rotate(225 36 36)"/><path d="M36 9.5 V13" stroke="#fff" stroke-width="0.9" opacity=".75" transform="rotate(232 36 36)"/><path d="M36 9.5 V14.5" stroke="#fff" stroke-width="0.9" opacity=".75" transform="rotate(240 36 36)"/><path d="M36 9.5 V13" stroke="#fff" stroke-width="0.9" opacity=".75" transform="rotate(247 36 36)"/><path d="M36 9.5 V14.5" stroke="#fff" stroke-width="0.9" opacity=".75" transform="rotate(255 36 36)"/><path d="M36 9.5 V13" stroke="#fff" stroke-width="0.9" opacity=".75" transform="rotate(262 36 36)"/><path d="M36 9.5 V14.5" stroke="#fff" stroke-width="0.9" opacity=".75" transform="rotate(270 36 36)"/><path d="M36 9.5 V13" stroke="#fff" stroke-width="0.9" opacity=".75" transform="rotate(277 36 36)"/><path d="M36 9.5 V14.5" stroke="#fff" stroke-width="0.9" opacity=".75" transform="rotate(285 36 36)"/><path d="M36 9.5 V13" stroke="#fff" stroke-width="0.9" opacity=".75" transform="rotate(292 36 36)"/><path d="M36 9.5 V14.5" stroke="#fff" stroke-width="0.9" opacity=".75" transform="rotate(300 36 36)"/><path d="M36 9.5 V13" stroke="#fff" stroke-width="0.9" opacity=".75" transform="rotate(307 36 36)"/><path d="M36 9.5 V14.5" stroke="#fff" stroke-width="0.9" opacity=".75" transform="rotate(315 36 36)"/><path d="M36 9.5 V13" stroke="#fff" stroke-width="0.9" opacity=".75" transform="rotate(322 36 36)"/><path d="M36 9.5 V14.5" stroke="#fff" stroke-width="0.9" opacity=".75" transform="rotate(330 36 36)"/><path d="M36 9.5 V13" stroke="#fff" stroke-width="0.9" opacity=".75" transform="rotate(337 36 36)"/><path d="M36 9.5 V14.5" stroke="#fff" stroke-width="0.9" opacity=".75" transform="rotate(345 36 36)"/><path d="M36 9.5 V13" stroke="#fff" stroke-width="0.9" opacity=".75" transform="rotate(352 36 36)"/><path d="M54.5 17.500L39 39.500 32.500 33Z" fill="#ff2d3a"/><path d="M17.500 54.500L39 39.500 32.500 33Z" fill="#f4f6fa"/></svg>
<svg style="left:530.9px;top:1501.5px" width="71.5" height="71.5" viewBox="0 0 72 72"><rect width="72" height="72" rx="17" fill="url(#gWhite)" /><ellipse cx="36" cy="19.5" rx="8.6" ry="13" fill="#ff9500" opacity=".86" transform="rotate(0 36 36)"/><ellipse cx="36" cy="19.5" rx="8.6" ry="13" fill="#ffcc00" opacity=".86" transform="rotate(45 36 36)"/><ellipse cx="36" cy="19.5" rx="8.6" ry="13" fill="#7ac70c" opacity=".86" transform="rotate(90 36 36)"/><ellipse cx="36" cy="19.5" rx="8.6" ry="13" fill="#2fb24c" opacity=".86" transform="rotate(135 36 36)"/><ellipse cx="36" cy="19.5" rx="8.6" ry="13" fill="#2f8cf0" opacity=".86" transform="rotate(180 36 36)"/><ellipse cx="36" cy="19.5" rx="8.6" ry="13" fill="#7a52d8" opacity=".86" transform="rotate(225 36 36)"/><ellipse cx="36" cy="19.5" rx="8.6" ry="13" fill="#e04fc8" opacity=".86" transform="rotate(270 36 36)"/><ellipse cx="36" cy="19.5" rx="8.6" ry="13" fill="#ff4f4f" opacity=".86" transform="rotate(315 36 36)"/><circle cx="36" cy="36" r="3.6" fill="#fff"/></svg>
<svg style="left:626.7px;top:1501.5px" width="71.5" height="71.5" viewBox="0 0 72 72"><rect width="72" height="72" rx="17" fill="url(#gGreen)" /><rect x="10" y="20" width="38" height="33" rx="7" fill="#f0fff2" opacity=".95"/><path d="M49.500 33.500L60 23.500q2-1.500 2 1V48q0 2.500-2 1L49.500 39.500Z" fill="#e6fbe9"/></svg>
<svg style="left:722.5px;top:1501.5px" width="71.5" height="71.5" viewBox="0 0 72 72"><rect width="72" height="72" rx="17" fill="url(#gWhite)" /><text x="36" y="22.500" font-family="Liberation Sans,sans-serif" font-size="14.500" font-weight="700" fill="#ff3b30" text-anchor="middle" letter-spacing="-.3">Mon</text><text x="36" y="59" font-family="Liberation Sans,sans-serif" font-size="42" fill="#1c1c1e" text-anchor="middle" letter-spacing="-2.500">16</text></svg>
<svg style="left:818.3px;top:1501.5px" width="71.5" height="71.5" viewBox="0 0 72 72"><rect width="72" height="72" rx="17" fill="url(#gWhite)" /><circle cx="14" cy="18" r="4.800" fill="#2f7cf6"/><circle cx="14" cy="36" r="4.800" fill="#f0453a"/><circle cx="14" cy="54" r="4.800" fill="#f7962e"/><path d="M27 18h36M27 36h36M27 54h36" stroke="#c9c9cd" stroke-width="1.500"/></svg>
<svg style="left:914.1px;top:1501.5px" width="71.5" height="71.5" viewBox="0 0 72 72"><rect width="72" height="72" rx="17" fill="url(#gMirror)" /><rect x="18.500" y="9.500" width="23" height="44.500" rx="4.500" fill="#1f2a57"/><rect x="30.500" y="18" width="23.500" height="45" rx="4.500" fill="#ebeafc" stroke="#f8f8ff" stroke-width="1"/><rect x="35.0" y="23.0" width="4" height="4" rx=".8" fill="#b9b9cc"/><rect x="40.5" y="23.0" width="4" height="4" rx=".8" fill="#b9b9cc"/><rect x="46.0" y="23.0" width="4" height="4" rx=".8" fill="#b9b9cc"/><rect x="35.0" y="28.5" width="4" height="4" rx=".8" fill="#b9b9cc"/><rect x="40.5" y="28.5" width="4" height="4" rx=".8" fill="#b9b9cc"/><rect x="46.0" y="28.5" width="4" height="4" rx=".8" fill="#b9b9cc"/><rect x="35.0" y="34.0" width="4" height="4" rx=".8" fill="#b9b9cc"/><rect x="40.5" y="34.0" width="4" height="4" rx=".8" fill="#b9b9cc"/><rect x="35.0" y="55" width="4" height="4" rx=".8" fill="#a9a9c4"/><rect x="40.5" y="55" width="4" height="4" rx=".8" fill="#a9a9c4"/><rect x="46.0" y="55" width="4" height="4" rx=".8" fill="#a9a9c4"/></svg>
<svg style="left:1009.8px;top:1501.5px" width="71.5" height="71.5" viewBox="0 0 72 72"><rect width="72" height="72" rx="17" fill="url(#gGrey)" /><ellipse cx="40" cy="60" rx="22" ry="3.500" fill="#8e8e92" opacity=".55" transform="rotate(-12 40 60)"/><path d="M59 8.500Q61 25 50 36q-5 7-16 14-9 6-19 13 2-13 10-24 8-10 19-18 9-6 15-12.500Z" fill="url(#gFeather)"/><path d="M59 8.500Q44 30 15 63" fill="none" stroke="#3e1a78" stroke-width="1.300"/><path d="M52 22q3 10-12 22" fill="none" stroke="#e9d9fb" stroke-width="1.500" opacity=".8"/></svg>
<svg style="left:1105.6px;top:1501.5px" width="71.5" height="71.5" viewBox="0 0 72 72"><clipPath id="cN"><rect width="72" height="72" rx="17"/></clipPath><g clip-path="url(#cN)"><rect width="72" height="72" fill="url(#gWhite)"/><rect width="72" height="17.500" fill="#ffd02f"/><path d="M2 20h68" stroke="#d8c27a" stroke-width="1" stroke-dasharray="1.500 2"/></g><path d="M9.500 36h53M9.500 54h53" stroke="#c6c6ca" stroke-width="1.500"/></svg>
<svg style="left:1201.4px;top:1501.5px" width="71.5" height="71.5" viewBox="0 0 72 72"><rect width="72" height="72" rx="17" fill="url(#gGrey)" /><rect x="12" y="12" width="47" height="48" rx="9" fill="#0d4a8c"/><path d="M30 9q1 10 3 17h3.500q-1-9-3-17zM49 7q-1 10-3 19h-3.500q2-10 3-18z" fill="#e9eef5"/><path d="M27 27h29l1 3.500H26z" fill="#111"/><rect x="31" y="15.500" width="19" height="11" rx="2" fill="#161616"/><rect x="30.500" y="23" width="20.500" height="3.200" fill="#f2b311"/><path d="M31 31h19l1 9q-3 9-11 9-8-1-10-9z" fill="#c6c9ce"/><path d="M30.500 31.500h20v4q-5 3-10 0-5 3-10 0z" fill="#0a0a0a"/><ellipse cx="35" cy="45.500" rx="8" ry="6.500" fill="#f3f4f6"/><path d="M14 60q1-14 11-18l3-11q-5-3-8 3-4 8-6 17zM25 60l5-11q10 7 20 0l6 4 3 7z" fill="#1a1a1a"/><path d="M43 51l3 9h-6z" fill="#fff"/><path d="M44 53.500l1 6.500h-2.500z" fill="#111"/><path d="M22 24q4-6 7 0l-2 10q-4 2-7-1z" fill="#b9bdc4"/></svg>
<svg style="left:1297.2px;top:1501.5px" width="71.5" height="71.5" viewBox="0 0 72 72"><rect width="72" height="72" rx="17" fill="url(#gFox)" /><path d="M30 17Q36 9 44 5.500q1 6 6 10.500 3-1 3.500-5Q60 18 62.500 27q3 12-2 23Q53 66 36 66.500 19 66 11.500 52 6 40 10 28q2-7 6.500-13 .5 4 3 7 1-4 4.500-6 .5 3 2 5.500Q28 19 30 17Z" fill="url(#gFoxO)"/><path d="M44 5.500q1 6 6 10.500 3-1 3.500-5Q60 18 62.500 27q3 12-2 23Q56 60 47 64q9-9 8.500-22Q55 30 46 24q4-3 3-8-1-5-5-10.500Z" fill="#ffe14a" opacity=".85"/><circle cx="35.500" cy="36.500" r="12.800" fill="url(#gFoxP)"/><path d="M11 33q1-7 5.500-15 .5 4 3 6.500 1-3.500 4.500-5.500.5 3 2 5.500 6 .5 12 6.500-5 0-7 2.500-1.500 2-1.500 5-2.500-3.500-2-7-5-1.500-10 0-4 1.500-5.500 6-.6-2.500-.5-5Z" fill="#ff9a1f"/><path d="M15 31q5-2 10-.5 4 1 5.500-.5-2.500-3.500-7-4-5 0-8.500 5Z" fill="#ffc43a"/><path d="M23 44q3 9 12 9.500 10 0 13.500-9 1 9-6 15-7 4-15 0-7-6-4.500-15.500Z" fill="#ff4a3a" opacity=".55"/></svg>
<svg style="left:1393.0px;top:1501.5px" width="71.5" height="71.5" viewBox="0 0 72 72"><rect width="72" height="72" rx="17" fill="#fff" /><circle cx="36" cy="36" r="29" fill="#fff"/><path d="M36 36L10.900 21.500A29 29 0 0 1 61.100 21.500Z" fill="#f1261c"/><path d="M10.900 21.500A29 29 0 0 1 61.100 21.500H36Z" fill="#f1261c"/><path d="M36 36L61.100 21.500A29 29 0 0 1 36 65Z" fill="#fbbc04"/><path d="M61.100 21.500A29 29 0 0 1 36 65L48.600 43.200Z" fill="#fbbc04"/><path d="M36 36L36 65A29 29 0 0 1 10.900 21.500Z" fill="#17a047"/><path d="M36 21.500H61.100L48.600 43.200Z" fill="#fbbc04"/><path d="M48.600 43.250L36 65 23.400 43.250Z" fill="#17a047"/><path d="M23.400 43.250L10.900 21.500H36Z" fill="#f1261c"/><circle cx="36" cy="36" r="14.500" fill="#fff"/><circle cx="36" cy="36" r="11.600" fill="#1f7ded"/></svg>
<svg style="left:1488.7px;top:1501.5px" width="71.5" height="71.5" viewBox="0 0 72 72"><rect width="72" height="72" rx="17" fill="#000" stroke="#2b2b2b" stroke-width="1.200"/><circle cx="36" cy="36" r="29" fill="#1ed760"/><path d="M19 27.500q17-5.500 35 2.500" fill="none" stroke="#000" stroke-width="5.400" stroke-linecap="round"/><path d="M21 38q14-4.500 29 2.500" fill="none" stroke="#000" stroke-width="4.400" stroke-linecap="round"/><path d="M23 47q12-3.500 24 2" fill="none" stroke="#000" stroke-width="3.600" stroke-linecap="round"/></svg>
<svg style="left:1584.5px;top:1501.5px" width="71.5" height="71.5" viewBox="0 0 72 72"><rect width="72" height="72" rx="17" fill="url(#gStore)" /><g stroke="#eaf6ff" stroke-width="5" stroke-linecap="round" opacity=".95"><path d="M41 15.500L17.500 56"/><path d="M31.500 15.500L55 56" opacity=".8"/><path d="M12.500 45.500H59.500" opacity=".85"/></g></svg>
<svg style="left:1680.3px;top:1501.5px" width="71.5" height="71.5" viewBox="0 0 72 72"><rect width="72" height="72" rx="17" fill="url(#gSet)" /><rect x="34.500" y="7.600" width="3" height="6" rx=".6" fill="#e6e6ea" transform="rotate(0.0 36 36)"/><rect x="34.500" y="7.600" width="3" height="6" rx=".6" fill="#e6e6ea" transform="rotate(9.47 36 36)"/><rect x="34.500" y="7.600" width="3" height="6" rx=".6" fill="#e6e6ea" transform="rotate(18.94 36 36)"/><rect x="34.500" y="7.600" width="3" height="6" rx=".6" fill="#e6e6ea" transform="rotate(28.410000000000004 36 36)"/><rect x="34.500" y="7.600" width="3" height="6" rx=".6" fill="#e6e6ea" transform="rotate(37.88 36 36)"/><rect x="34.500" y="7.600" width="3" height="6" rx=".6" fill="#e6e6ea" transform="rotate(47.35 36 36)"/><rect x="34.500" y="7.600" width="3" height="6" rx=".6" fill="#e6e6ea" transform="rotate(56.82000000000001 36 36)"/><rect x="34.500" y="7.600" width="3" height="6" rx=".6" fill="#e6e6ea" transform="rotate(66.29 36 36)"/><rect x="34.500" y="7.600" width="3" height="6" rx=".6" fill="#e6e6ea" transform="rotate(75.76 36 36)"/><rect x="34.500" y="7.600" width="3" height="6" rx=".6" fill="#e6e6ea" transform="rotate(85.23 36 36)"/><rect x="34.500" y="7.600" width="3" height="6" rx=".6" fill="#e6e6ea" transform="rotate(94.7 36 36)"/><rect x="34.500" y="7.600" width="3" height="6" rx=".6" fill="#e6e6ea" transform="rotate(104.17 36 36)"/><rect x="34.500" y="7.600" width="3" height="6" rx=".6" fill="#e6e6ea" transform="rotate(113.64000000000001 36 36)"/><rect x="34.500" y="7.600" width="3" height="6" rx=".6" fill="#e6e6ea" transform="rotate(123.11000000000001 36 36)"/><rect x="34.500" y="7.600" width="3" height="6" rx=".6" fill="#e6e6ea" transform="rotate(132.58 36 36)"/><rect x="34.500" y="7.600" width="3" height="6" rx=".6" fill="#e6e6ea" transform="rotate(142.05 36 36)"/><rect x="34.500" y="7.600" width="3" height="6" rx=".6" fill="#e6e6ea" transform="rotate(151.52 36 36)"/><rect x="34.500" y="7.600" width="3" height="6" rx=".6" fill="#e6e6ea" transform="rotate(160.99 36 36)"/><rect x="34.500" y="7.600" width="3" height="6" rx=".6" fill="#e6e6ea" transform="rotate(170.46 36 36)"/><rect x="34.500" y="7.600" width="3" height="6" rx=".6" fill="#e6e6ea" transform="rotate(179.93 36 36)"/><rect x="34.500" y="7.600" width="3" height="6" rx=".6" fill="#e6e6ea" transform="rotate(189.4 36 36)"/><rect x="34.500" y="7.600" width="3" height="6" rx=".6" fill="#e6e6ea" transform="rotate(198.87 36 36)"/><rect x="34.500" y="7.600" width="3" height="6" rx=".6" fill="#e6e6ea" transform="rotate(208.34 36 36)"/><rect x="34.500" y="7.600" width="3" height="6" rx=".6" fill="#e6e6ea" transform="rotate(217.81 36 36)"/><rect x="34.500" y="7.600" width="3" height="6" rx=".6" fill="#e6e6ea" transform="rotate(227.28000000000003 36 36)"/><rect x="34.500" y="7.600" width="3" height="6" rx=".6" fill="#e6e6ea" transform="rotate(236.75000000000003 36 36)"/><rect x="34.500" y="7.600" width="3" height="6" rx=".6" fill="#e6e6ea" transform="rotate(246.22000000000003 36 36)"/><rect x="34.500" y="7.600" width="3" height="6" rx=".6" fill="#e6e6ea" transform="rotate(255.69000000000003 36 36)"/><rect x="34.500" y="7.600" width="3" height="6" rx=".6" fill="#e6e6ea" transform="rotate(265.16 36 36)"/><rect x="34.500" y="7.600" width="3" height="6" rx=".6" fill="#e6e6ea" transform="rotate(274.63 36 36)"/><rect x="34.500" y="7.600" width="3" height="6" rx=".6" fill="#e6e6ea" transform="rotate(284.1 36 36)"/><rect x="34.500" y="7.600" width="3" height="6" rx=".6" fill="#e6e6ea" transform="rotate(293.57 36 36)"/><rect x="34.500" y="7.600" width="3" height="6" rx=".6" fill="#e6e6ea" transform="rotate(303.04 36 36)"/><rect x="34.500" y="7.600" width="3" height="6" rx=".6" fill="#e6e6ea" transform="rotate(312.51000000000005 36 36)"/><rect x="34.500" y="7.600" width="3" height="6" rx=".6" fill="#e6e6ea" transform="rotate(321.98 36 36)"/><rect x="34.500" y="7.600" width="3" height="6" rx=".6" fill="#e6e6ea" transform="rotate(331.45000000000005 36 36)"/><rect x="34.500" y="7.600" width="3" height="6" rx=".6" fill="#e6e6ea" transform="rotate(340.92 36 36)"/><rect x="34.500" y="7.600" width="3" height="6" rx=".6" fill="#e6e6ea" transform="rotate(350.39000000000004 36 36)"/><circle cx="36" cy="36" r="21.800" fill="#8b8b91" stroke="#ececf0" stroke-width="4.600"/><circle cx="36" cy="36" r="17" fill="none" stroke="#c3c3c9" stroke-width="3.400" stroke-dasharray="1.900 2.100"/><circle cx="36" cy="36" r="14.200" fill="#8f8f95"/><g stroke="#e9e9ed" stroke-width="3.300" stroke-linecap="butt"><path d="M36 36H58"/><path d="M36 36L25 17"/><path d="M36 36L25 55"/></g><circle cx="36" cy="36" r="3.600" fill="#e9e9ed"/><circle cx="36" cy="36" r="1.300" fill="#77777d"/></svg>
<svg style="left:1776.1px;top:1501.5px" width="71.5" height="71.5" viewBox="0 0 72 72"><rect width="72" height="72" rx="17" fill="url(#gGreen)" /><g opacity=".85"><path d="M36 9.500A26 26 0 1 1 22.500 58.200L9.500 62 13.300 49.300A26 26 0 0 1 36 9.500Z" fill="none" stroke="#f0fff2" stroke-width="3.600" stroke-linejoin="round"/><path d="M27 22.500q2.500-1.500 3.800 1l2 4.500q.6 1.600-.8 2.800l-1.600 1.600q3.500 6.500 10 10l1.800-1.800q1.200-1.200 2.800-.5l4.500 2.200q2.200 1.200 1 3.500-2.500 4.500-7.500 3.500Q29 45 23.500 31q-1.200-5.500 3.500-8.500Z" fill="#f0fff2"/></g></svg>
<svg style="left:1871.9px;top:1501.5px" width="71.5" height="71.5" viewBox="0 0 72 72"><rect width="72" height="72" rx="17" fill="#fff" /><path d="M36 9.500A26 26 0 1 1 22.500 58.200L9.500 62 13.300 49.300A26 26 0 0 1 36 9.500Z" fill="none" stroke="#45e084" stroke-width="3.600" stroke-linejoin="round"/><path d="M27 22.500q2.500-1.500 3.800 1l2 4.500q.6 1.600-.8 2.800l-1.600 1.600q3.500 6.500 10 10l1.800-1.800q1.200-1.200 2.800-.5l4.500 2.200q2.200 1.200 1 3.500-2.500 4.500-7.500 3.500Q29 45 23.500 31q-1.200-5.500 3.500-8.500Z" fill="#45e084"/></svg>
<svg style="left:1967.6px;top:1501.5px" width="71.5" height="71.5" viewBox="0 0 72 72"><rect width="72" height="72" rx="17" fill="url(#gWhite)" /><path d="M24 8.500h24l3.500 4 5-.8 5 7.300-2 6.500 1.500 5-7 23.500q-1 3-4 5L36.200 69 22 59q-3-2-4-5l-7-23.500 1.500-5-2-6.500 5-7.300 5 .8z" fill="url(#gBrave)"/><path d="M36 20.500l7-1.500 8.500 2.500 3 5-4.500 7.500 1.500 4-6.500 6.500 1.500 4.500-5 3.500-5.500-3.500-5.500 3.500-5-3.500 1.500-4.500L20.500 38l1.500-4-4.500-7.500 3-5 8.500-2.500z" fill="#fff"/><path d="M22 27l9 1.500-1.500 4.500zM50 27l-9 1.500 1.500 4.500zM30 41l6 2 6-2-6 8z" fill="url(#gBrave)"/><path d="M28.500 55l7.500-4.500 7.500 4.500-7.500 6z" fill="#fff"/></svg>
<svg style="left:2107.2px;top:1501.5px" width="71.5" height="71.5" viewBox="0 0 72 72"><rect width="72" height="72" rx="17" fill="url(#gUp)" /><circle cx="36" cy="36" r="26" fill="#000"/><path d="M19.500 28.500v8.500a6 6 0 0 0 12 0v-8.500M31.500 37q0 11 5-4 3-7 9.500-5.500a6.800 6.800 0 1 1-6 11.500M41 36.500L38 51.500" fill="none" stroke="#fff" stroke-width="3.600" stroke-linecap="round" stroke-linejoin="round"/></svg>
<svg style="left:2244.5px;top:1501.5px" width="71.5" height="71.5" viewBox="0 0 72 72"><path d="M6 8q0-4 5-4h50q5 0 5 4L61 66q-.5 5-5.500 5h-39q-5 0-5.500-5z" fill="url(#gTrash)" opacity=".92"/><rect x="6" y="3.500" width="60" height="9.500" rx="4.700" fill="#7e7e7e" stroke="#c9c9c9" stroke-width="1.600"/></svg>
<div class="a" style="left:2072.500px;top:1491px;width:1.500px;height:92px;background:#5a5a5c"></div>
<div class="a" style="left:2211.800px;top:1491px;width:1.500px;height:92px;background:#5a5a5c"></div>
<div class="a" style="left:275.0px;top:1585.500px;width:7px;height:7px;border-radius:50%;background:#9a9a9c"></div>
<div class="a" style="left:1424.5px;top:1585.500px;width:7px;height:7px;border-radius:50%;background:#9a9a9c"></div>
<div class="a" style="left:2138.5px;top:1585.500px;width:7px;height:7px;border-radius:50%;background:#9a9a9c"></div>
<div class="a" style="left:1821.500px;top:1491px;width:35px;height:35px;border-radius:50%;background:#f0392f"></div>
<span class="t" style="left:1829px;top:1499.07px;font-size:20px;font-weight:400;color:#fff;letter-spacing:-1.250px;">41</span>
<div><div>
</div></div>
</body></html>
